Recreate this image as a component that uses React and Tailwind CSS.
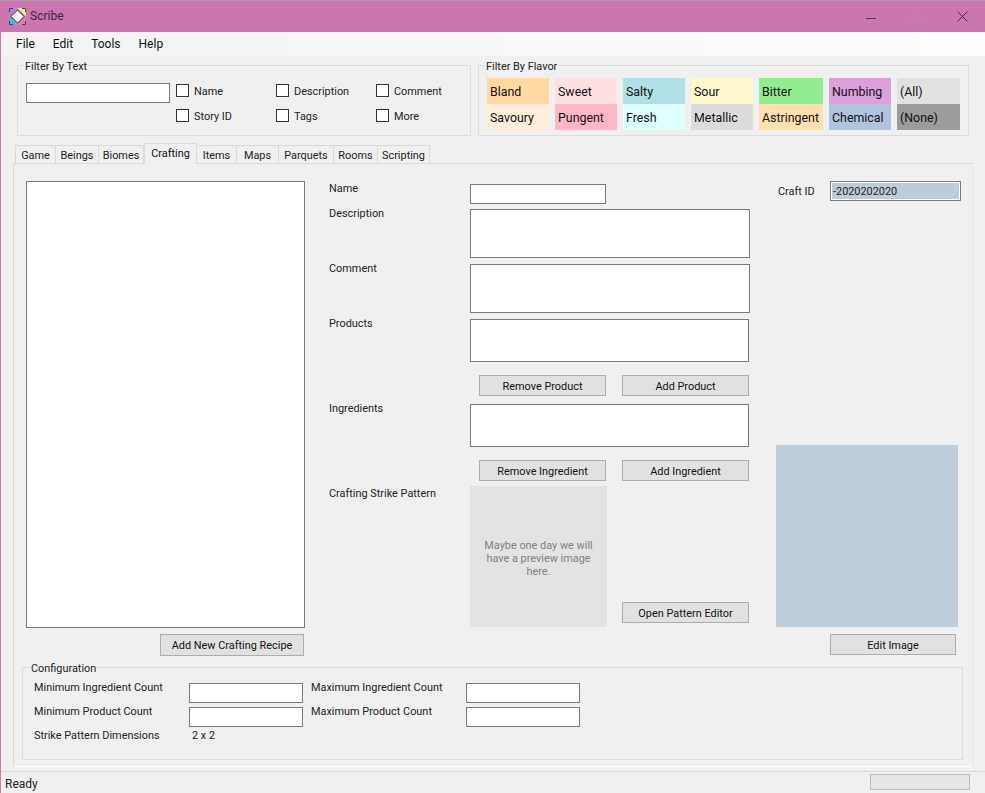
const font = { fontFamily: 'Roboto, "Noto Sans", sans-serif' };

function Btn({ className = "", children }) {
  return (
    <div className={"h-[21px] border border-[#adadad] bg-[#e1e1e1] flex items-center justify-center pt-[1px] text-[#111] shrink-0 " + className}>
      {children}
    </div>
  );
}

function Field({ className = "" }) {
  return <div className={"bg-white border border-[#7a7a7a] shrink-0 " + className} />;
}

function Check({ label }) {
  return (
    <div className="flex items-center h-[13px]">
      <div className="w-[13px] h-[13px] border border-[#333] bg-white shrink-0" />
      <span className="ml-[5px] mt-[1px] text-[#222]">{label}</span>
    </div>
  );
}

function Group({ title, className = "", titleClass = "left-[6px]", children }) {
  return (
    <div className={"relative border border-[#dcdcdc] " + className}>
      <span className={"absolute top-[-7px] bg-[#f0f0f0] px-[1px] leading-[15px] text-[#222] " + titleClass}>{title}</span>
      {children}
    </div>
  );
}

const flavors = [
  ["w-[62px]", "Bland", "bg-[#ffd8a4]", "Savoury", "bg-[#ffeed9]"],
  ["w-[62px]", "Sweet", "bg-[#ffe0e0]", "Pungent", "bg-[#ffb6c6]"],
  ["w-[62px]", "Salty", "bg-[#b0dfe6]", "Fresh", "bg-[#e0ffff]"],
  ["w-[62px]", "Sour", "bg-[#fff8cd]", "Metallic", "bg-[#dcdcdc]"],
  ["w-[64px]", "Bitter", "bg-[#90ee90]", "Astringent", "bg-[#ffdfb0]"],
  ["w-[62px]", "Numbing", "bg-[#dda0dd]", "Chemical", "bg-[#b0c4de]"],
  ["w-[63px]", "(All)", "bg-[#e1e1e1]", "(None)", "bg-[#9c9c9c]"],
];

const tabs = [
  ["Game", "w-[41px]"],
  ["Beings", "w-[43px]"],
  ["Biomes", "w-[45px]"],
  ["Crafting", "w-[53px]"],
  ["Items", "w-[40px]"],
  ["Maps", "w-[42px]"],
  ["Parquets", "w-[55px]"],
  ["Rooms", "w-[44px]"],
  ["Scripting", "w-[52px]"],
];

function Logo() {
  return (
    <svg width="17" height="17" viewBox="0 0 17 17" className="shrink-0">
      <polygon points="0,0 8.5,0 0,8.5" fill="#b57edc" />
      <polygon points="17,0 8.5,0 17,8.5" fill="#f5ef8a" />
      <polygon points="0,17 8.5,17 0,8.5" fill="#2fc4e8" />
      <polygon points="17,17 8.5,17 17,8.5" fill="#f07ab0" />
      <polygon points="8.5,2 15,8.5 8.5,15 2,8.5" fill="#fff" stroke="#333" strokeWidth="1" />
      <path d="M0.5 4V0.5H4M13 0.5H16.5V4M16.5 13V16.5H13M4 16.5H0.5V13" fill="none" stroke="#444" />
    </svg>
  );
}

export default function App() {
  return (
    <div style={font} className="w-[985px] h-[793px] overflow-hidden flex flex-col bg-[#f0f0f0] text-[10.9px] leading-[15px] border-l border-[#cc76b0]">
      {/* title bar */}
      <div className="h-[1px] bg-[#a9a0a6] shrink-0" />
      <div className="h-[31px] bg-[#cc76b0] shrink-0 flex items-center pl-[9px] -ml-[1px]">
        <Logo />
        <span className="ml-[4px] text-[12px] text-[#3a2535]">Scribe</span>
        <div className="ml-auto flex items-center pr-[17px]">
          <svg width="10" height="10" viewBox="0 0 10 10" className="mr-[35px]"><path d="M0 6.5H10" stroke="#444" /></svg>
          <svg width="10" height="10" viewBox="0 0 10 10" className="mr-[36px]"><rect x="0.5" y="0.5" width="9" height="9" fill="none" stroke="#b58aa8" /></svg>
          <svg width="11" height="11" viewBox="0 0 11 11"><path d="M0.5 0.5L10.5 10.5M10.5 0.5L0.5 10.5" stroke="#333" strokeWidth="1" /></svg>
        </div>
      </div>
      {/* menu */}
      <div className="h-[24px] shrink-0 flex items-center pl-[15px] gap-[18px] text-[12px] text-[#111] bg-gradient-to-r from-[#f3f3f3] to-[#fdfdfd]">
        <span>File</span>
        <span>Edit</span>
        <span>Tools</span>
        <span>Help</span>
      </div>
      {/* filters */}
      <div className="flex shrink-0 mt-[9px] ml-[16px] gap-[7px]">
        <Group title="Filter By Text" className="w-[454px] h-[71px] flex pl-[8px] pt-[17px]">
          <Field className="w-[144px] h-[20px]" />
          <div className="ml-[6px] mt-[1px] grid grid-cols-[100px_100px_100px] w-[300px] shrink-0 gap-y-[12px] content-start">
            <Check label="Name" />
            <Check label="Description" />
            <Check label="Comment" />
            <Check label="Story ID" />
            <Check label="Tags" />
            <Check label="More" />
          </div>
        </Group>
        <Group title="Filter By Flavor" className="w-[491px] h-[71px] flex gap-[6px] pl-[8px] pt-[12px]">
          {flavors.map(([w, a, ca, b, cb]) => (
            <div key={a} className={"flex flex-col text-[12.4px] text-[#111] " + w}>
              <div className={"h-[26px] flex items-center pl-[3px] " + ca}>{a}</div>
              <div className={"h-[26px] flex items-center pl-[3px] " + cb}>{b}</div>
            </div>
          ))}
        </Group>
      </div>
      {/* tabs */}
      <div className="flex items-end shrink-0 ml-[14px] mt-[5px] h-[22px] relative z-10">
        {tabs.map(([t, w]) =>
          t === "Crafting" ? (
            <div key={t} className={"h-[21px] bg-[#f0f0f0] border border-b-0 border-[#d9d9d9] flex items-start justify-center pt-[2px] -mb-[1px] text-[#111] " + w}>
              {t}
            </div>
          ) : (
            <div key={t} className={"h-[18px] bg-[#f0f0f0] border border-l-0 first:border-l border-b-0 border-[#d9d9d9] flex items-center justify-center pt-[1px] text-[#222] " + w}>
              {t}
            </div>
          )
        )}
      </div>
      {/* pane */}
      <div className="ml-[12px] w-[960px] h-[604px] shrink-0 border border-[#d9d9d9] border-b-white border-r-[#e4e4e4] flex flex-col">
        <div className="flex h-[492px] shrink-0">
          {/* left column */}
          <div className="w-[315px] shrink-0 pl-[12px] pt-[17px] flex flex-col">
            <Field className="w-[279px] h-[447px]" />
            <Btn className="w-[144px] h-[22px] mt-[6px] ml-[134px]">Add New Crafting Recipe</Btn>
          </div>
          {/* form labels + fields */}
          <div className="w-[141px] shrink-0 text-[#222]">
            <div className="mt-[17px]">Name</div>
            <div className="mt-[10px]">Description</div>
            <div className="mt-[40px]">Comment</div>
            <div className="mt-[40px]">Products</div>
            <div className="mt-[70px]">Ingredients</div>
            <div className="mt-[70px]">Crafting Strike Pattern</div>
          </div>
          <div className="w-[306px] shrink-0 pt-[20px] flex flex-col">
            <Field className="w-[136px] h-[20px]" />
            <Field className="w-[280px] h-[49px] mt-[5px]" />
            <Field className="w-[280px] h-[49px] mt-[6px]" />
            <Field className="w-[279px] h-[43px] mt-[6px]" />
            <div className="flex mt-[13px] ml-[9px] gap-[16px]">
              <Btn className="w-[127px]">Remove Product</Btn>
              <Btn className="w-[127px]">Add Product</Btn>
            </div>
            <Field className="w-[279px] h-[43px] mt-[8px]" />
            <div className="flex mt-[13px] ml-[9px] gap-[16px]">
              <Btn className="w-[127px]">Remove Ingredient</Btn>
              <Btn className="w-[127px]">Add Ingredient</Btn>
            </div>
            <div className="flex mt-[5px]">
              <div className="w-[137px] h-[141px] bg-[#e3e3e3] flex items-center justify-center text-center text-[#808080] leading-[13px] px-[8px] pt-[3px] shrink-0">
                Maybe one day we will have a preview image here.
              </div>
              <div className="ml-[15px] mt-auto mb-[4px]">
                <Btn className="w-[127px]">Open Pattern Editor</Btn>
              </div>
            </div>
          </div>
          {/* right column */}
          <div className="flex-1 flex flex-col pt-[17px]">
            <div className="flex items-center h-[20px] ml-[2px]">
              <span className="text-[#222] w-[52px]">Craft ID</span>
              <div className="w-[131px] h-[20px] border border-[#7a7a7a] outline outline-white -outline-offset-2 bg-[#bdccd9] flex items-center pl-[2px] text-[#222]">-2020202020</div>
            </div>
            <div className="w-[182px] h-[182px] bg-[#bfccd9] mt-[244px]" />
            <Btn className="w-[126px] mt-[7px] ml-[54px]">Edit Image</Btn>
          </div>
        </div>
        {/* configuration */}
        <Group title="Configuration" titleClass="left-[7px]" className="w-[941px] h-[93px] mt-[11px] ml-[8px] text-[#222]">
          <div className="flex pl-[11px] pt-[15px]">
            <div className="w-[155px] flex flex-col gap-[9px] shrink-0 mt-[-3px]">
              <div>Minimum Ingredient Count</div>
              <div>Minimum Product Count</div>
              <div>Strike Pattern Dimensions</div>
            </div>
            <div className="w-[122px] flex flex-col gap-[4px] shrink-0">
              <Field className="w-[114px] h-[20px]" />
              <Field className="w-[114px] h-[20px]" />
              <div className="ml-[3px] mt-[-3px]">2 x 2</div>
            </div>
            <div className="w-[155px] flex flex-col gap-[9px] shrink-0 mt-[-3px]">
              <div>Maximum Ingredient Count</div>
              <div>Maximum Product Count</div>
            </div>
            <div className="flex flex-col gap-[4px]">
              <Field className="w-[114px] h-[20px]" />
              <Field className="w-[114px] h-[20px]" />
            </div>
          </div>
        </Group>
      </div>
      {/* status */}
      <div className="mt-[4px] flex-1 border-t border-[#d9d9d9] flex items-center pl-[4px] pr-[15px] text-[12px] text-[#222]">
        <span className="mt-[3px]">Ready</span>
        <div className="ml-auto w-[100px] h-[16px] mt-[-1px] border border-[#bcbcbc] bg-[#e6e6e6]" />
      </div>
    </div>
  );
}
